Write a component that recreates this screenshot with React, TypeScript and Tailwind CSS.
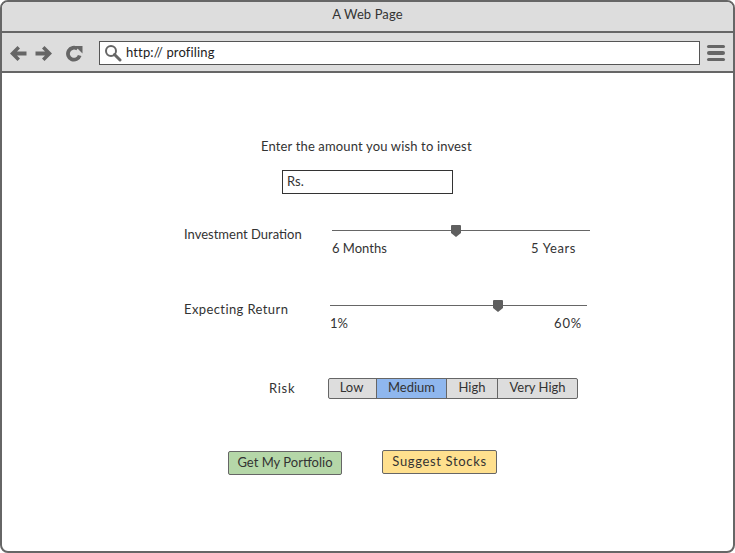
const font = { fontFamily: '"Lato", "Noto Sans", sans-serif' };

function Slider({ pos, left, right, className, labelsClass, rightClass }: { pos: number; left: string; right: string; className: string; labelsClass: string; rightClass: string }) {
  return (
    <div className={className}>
      <div className="relative h-px bg-[#666666]">
        <svg className="absolute top-[-5px]" style={{ left: pos }} width="10" height="12" viewBox="0 0 10 12">
          <path d="M0 1 Q0 0 1 0 H9 Q10 0 10 1 V8 L5 12 L0 8 Z" fill="#5f5f5f" />
        </svg>
      </div>
      <div className={labelsClass}>
        <span>{left}</span>
        <span className={rightClass}>{right}</span>
      </div>
    </div>
  );
}

export default function App() {
  return (
    <div
      className="flex h-[553px] w-[735px] flex-col overflow-hidden rounded-[8px] border-2 border-[#666666] bg-white text-[13px] text-[#333333]"
      style={font}
    >
      <div className="flex h-[31px] shrink-0 items-center justify-center border-b-2 border-[#666666] bg-[#dddddd] pb-[5px] text-[13px] leading-none tracking-[0.1px]">
        A Web Page
      </div>
      <div className="flex h-[40px] shrink-0 items-center border-b-2 border-[#666666] bg-[#dddddd] pl-[7px] pr-[8px] pt-[2px]">
        <svg width="18" height="17" viewBox="0 0 18 17" className="shrink-0">
          <path d="M8.5 1 L1 8.5 L8.5 16 L11 13.5 L8 10.5 H17.5 V6.5 H8 L11 3.5 Z" fill="#666666" />
        </svg>
        <svg width="18" height="17" viewBox="0 0 18 17" className="ml-[8px] shrink-0">
          <path d="M9.5 1 L17 8.5 L9.5 16 L7 13.5 L10 10.5 H0.5 V6.5 H10 L7 3.5 Z" fill="#666666" />
        </svg>
        <svg width="17" height="17" viewBox="0 0 17 17" className="ml-[13px] shrink-0">
          <path d="M13.7 10.5 A6 6 0 1 1 11.5 3.8" fill="none" stroke="#666666" strokeWidth="3.8" />
          <path d="M9 1 H16.5 V8.5 Z" fill="#666666" />
        </svg>
        <div className="ml-[16px] flex h-[24px] flex-1 items-center border-[1.5px] border-[#555555] bg-white pl-[4px]">
          <svg width="18" height="18" viewBox="0 0 18 18" className="shrink-0">
            <circle cx="7" cy="7" r="5" fill="none" stroke="#666666" strokeWidth="2" />
            <path d="M10.5 10.5 L16 16" stroke="#666666" strokeWidth="3" strokeLinecap="round" />
          </svg>
          <span className="ml-[4px] tracking-[0.15px] text-[#222222]">http:// profiling</span>
        </div>
        <div className="ml-[7px] flex w-[18px] shrink-0 flex-col gap-[3px]">
          <div className="h-[3.5px] rounded-full bg-[#666666]" />
          <div className="h-[3.5px] rounded-full bg-[#666666]" />
          <div className="h-[3.5px] rounded-full bg-[#666666]" />
        </div>
      </div>

      <div className="flex flex-1 flex-col">
        <div className="mt-[65px] pl-[259px] leading-[17px] tracking-[0.15px]">Enter the amount you wish to invest</div>
        <div className="ml-[280px] mt-[15px] flex h-[24px] w-[171px] items-center border border-[#333333] pl-[4px]">Rs.</div>

        <div className="ml-[182px] mt-[36px] flex">
          <span className="mt-[-4px] w-[148px] leading-[17px]">Investment Duration</span>
          <Slider className="w-[258px]" labelsClass="mt-[9px] flex justify-between pr-[14px] leading-[17px]" rightClass="tracking-[0.6px]" pos={119} left="6 Months" right="5 Years" />
        </div>

        <div className="ml-[182px] mt-[48px] flex">
          <span className="mt-[-4px] w-[146px] leading-[17px] tracking-[0.4px]">Expecting Return</span>
          <Slider className="w-[257px]" labelsClass="mt-[9px] flex justify-between pr-[5px] leading-[17px]" rightClass="tracking-[0.8px]" pos={163} left="1%" right="60%" />
        </div>

        <div className="ml-[267px] mt-[46px] flex items-center">
          <span className="w-[59px] leading-[17px] tracking-[0.7px]">Risk</span>
          <div className="flex h-[21px] w-[250px] rounded-[2px] border border-[#666666] bg-[#dddddd] text-center leading-[17px]">
            <span className="w-[48px] border-r border-[#666666] pr-[2px]">Low</span>
            <span className="w-[70px] border-r border-[#666666] bg-[#8fb7ee]">Medium</span>
            <span className="w-[51px] border-r border-[#666666]">High</span>
            <span className="flex-1">Very High</span>
          </div>
        </div>

        <div className="ml-[226px] mt-[51px] flex items-start">
          <button className="mt-px h-[24px] w-[114px] rounded-[2px] border border-[#666666] bg-[#b5d7a8] pb-[2px] leading-none">
            Get My Portfolio
          </button>
          <button className="ml-[40px] h-[24px] w-[115px] rounded-[2px] border border-[#666666] bg-[#ffe08e] pb-[2px] leading-none tracking-[0.65px]">
            Suggest Stocks
          </button>
        </div>
      </div>
    </div>
  );
}
